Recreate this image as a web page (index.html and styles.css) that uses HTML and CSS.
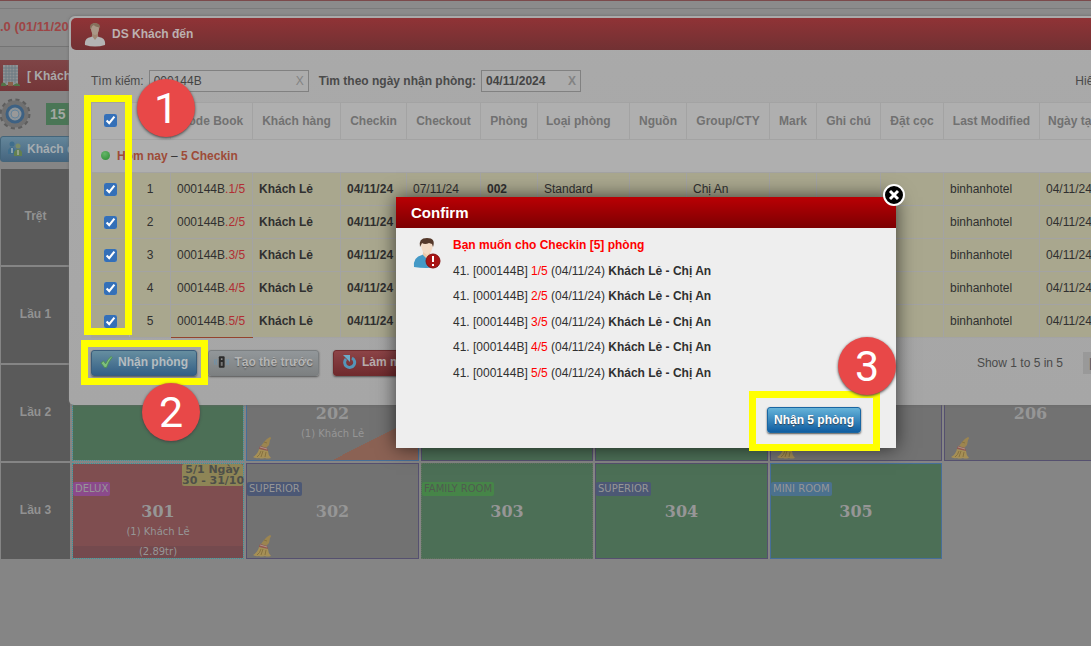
FILE: index.html
```
<!DOCTYPE html>
<html lang="vi">
<head>
<meta charset="utf-8">
<title>DS Khách đến</title>
<link rel="stylesheet" href="styles.css">
</head>
<body>
<svg class="defs" width="0" height="0" aria-hidden="true">
  <symbol id="broom" viewBox="0 0 20 22">
    <path d="M18 0q2 1 0 3l-1 5-3 3-5-2 3-4q2-3 6-5z" fill="#9c8550"/>
    <path d="M8 9l7 2 1 3-9-2z" fill="#97564d"/>
    <path d="M8 10l7 2" stroke="#a9958b"/>
    <path d="M7 12l9 2q0 4 3 7-4 1-6 0-4 1-6 0-3 1-6-1 5-3 6-8z" fill="#a58f56"/>
    <path d="M9 14q-1 4-4 6M11 14l-2 6M14 15l-1 5M12 5l3 1" stroke="#87723f" fill="none"/>
  </symbol>
</svg>
<div class="page">
  <header class="topbar"><span class="version">.0 (01/11/2024)</span></header>
  <div class="side">
    <h2 class="side-title">
      <svg width="20" height="24" viewBox="0 0 20 24"><path d="M2 1h15v20H2z" fill="#8f9294"/><path d="M2 4h15M2 7h15M2 10h15M2 13h15M2 16h15M5 1v18M8 1v18M11 1v18M14 1v18" stroke="#6d7b82"/><path d="M7 18h5v4H7z" fill="#8b604a"/><path d="M0 22q0-5 4-3l2 3zm12 0q3-5 7-1v1z" fill="#527548"/></svg>
      <span>[ Khách sạn ]</span>
    </h2>
    <div class="side-stats">
      <svg width="32" height="32" viewBox="0 0 32 32"><circle cx="15" cy="16" r="14" fill="none" stroke="#5e5e5e" stroke-width="3" stroke-dasharray="4 3.33"/><circle cx="15" cy="16" r="11" fill="none" stroke="#707070" stroke-width="5"/><circle cx="15" cy="16" r="8" fill="#8d9499" stroke="#3d6183" stroke-width="3"/><circle cx="15" cy="16" r="4" fill="#999" stroke="#65849b"/></svg>
      <span class="count">15</span>
    </div>
    <button class="side-btn" type="button">
      <svg width="16" height="16" viewBox="0 0 16 16"><circle cx="5" cy="3" r="2.500" fill="#3f6e8c"/><path d="M1 13V9q4-6 7 0v4z" fill="#3f6e8c"/><path d="M4 7h2v5H4z" fill="#8ba1ae"/><circle cx="11" cy="5" r="2.500" fill="#7a8c68"/><path d="M7 15v-4q4-6 8 0v4z" fill="#638050"/><path d="M10 9h2v5h-2z" fill="#94a28a"/></svg>
      Khách đến
    </button>
  </div>
  <main class="rooms">
    <div class="floor">Trệt</div><div class="row-rest"></div>
    <div class="floor">Lầu 1</div><div class="row-rest"></div>
    <div class="floor">Lầu 2</div>
    <div class="room free dotted"></div>
    <div class="room dirty blue split"><b>202</b><span>(1) Khách Lẻ</span><svg class="broom"><use href="#broom"/></svg></div>
    <div class="room free"></div>
    <div class="room free"></div>
    <div class="room dirty"><svg class="broom"><use href="#broom"/></svg></div>
    <div class="room dirty"><b>206</b><svg class="broom"><use href="#broom"/></svg></div>
    <div class="floor">Lầu 3</div>
    <div class="room busy dotted"><em class="tag delux">DELUX</em><em class="stay">5/1 Ngày<br>30 - 31/10</em><b>301</b><span>(1) Khách Lẻ</span><span class="price">(2.89tr)</span></div>
    <div class="room dirty"><em class="tag superior">SUPERIOR</em><b>302</b><svg class="broom"><use href="#broom"/></svg></div>
    <div class="room free plain"><em class="tag family">FAMILY ROOM</em><b>303</b></div>
    <div class="room free"><em class="tag superior">SUPERIOR</em><b>304</b></div>
    <div class="room free blue"><em class="tag mini">MINI ROOM</em><b>305</b></div>
  </main>

  <section class="panel" aria-label="DS Khách đến">
    <h1 class="panel-head">
      <svg width="22" height="26" viewBox="0 0 22 26"><path d="M1 24q-1-7 6-8l2-1h4l2 1q7 1 6 8-10 3-20 0z" fill="#b4b4b4"/><path d="M8 11h6v4l-3 4-3-4z" fill="#a08874"/><ellipse cx="11" cy="8" rx="4" ry="6" fill="#aa9887"/><path d="M6 8q-1-6 5-6t5 6l-1-2q-4 0-5-2-3 1-3 4z" fill="#85715c"/></svg>
      DS Khách đến
    </h1>
    <form class="filters">
      <label for="q">Tìm kiếm:</label>
      <span class="field wide"><input id="q" type="text" value="000144B"><button type="button" aria-label="Xóa tìm kiếm">X</button></span>
      <label class="strong" for="d">Tìm theo ngày nhận phòng:</label>
      <span class="field date"><input id="d" type="text" value="04/11/2024"><button type="button" aria-label="Xóa ngày">X</button></span>
      <span class="display">Hiển thị</span>
    </form>
    <table class="guests">
      <colgroup><col class="w38"><col class="w41"><col class="w82"><col class="w88"><col class="w66"><col class="w74"><col class="w57"><col class="w92"><col class="w57"><col class="w83"><col class="w47"><col class="w64"><col class="w63"><col class="w96"><col class="w92"></colgroup>
      <thead><tr><th><input type="checkbox" checked aria-label="Chọn tất cả"></th><th>No</th><th>Code Book</th><th>Khách hàng</th><th>Checkin</th><th>Checkout</th><th>Phòng</th><th class="start">Loại phòng</th><th>Nguồn</th><th>Group/CTY</th><th>Mark</th><th>Ghi chú</th><th>Đặt cọc</th><th>Last Modified</th><th class="start">Ngày tạo</th></tr></thead>
      <tbody>
        <tr class="group"><td colspan="15"><i class="dot"></i><b>Hôm nay</b> – <b>5 Checkin</b></td></tr>
        <tr><td><input type="checkbox" checked aria-label="Chọn 1"></td><td>1</td><td>000144B<i>.1/5</i></td><td><b>Khách Lẻ</b></td><td><b>04/11/24</b></td><td>07/11/24</td><td><b>002</b></td><td>Standard</td><td></td><td>Chị An</td><td></td><td></td><td></td><td>binhanhotel</td><td>04/11/24</td></tr>
        <tr><td><input type="checkbox" checked aria-label="Chọn 2"></td><td>2</td><td>000144B<i>.2/5</i></td><td><b>Khách Lẻ</b></td><td><b>04/11/24</b></td><td></td><td></td><td></td><td></td><td></td><td></td><td></td><td></td><td>binhanhotel</td><td>04/11/24</td></tr>
        <tr><td><input type="checkbox" checked aria-label="Chọn 3"></td><td>3</td><td>000144B<i>.3/5</i></td><td><b>Khách Lẻ</b></td><td><b>04/11/24</b></td><td></td><td></td><td></td><td></td><td></td><td></td><td></td><td></td><td>binhanhotel</td><td>04/11/24</td></tr>
        <tr><td><input type="checkbox" checked aria-label="Chọn 4"></td><td>4</td><td>000144B<i>.4/5</i></td><td><b>Khách Lẻ</b></td><td><b>04/11/24</b></td><td></td><td></td><td></td><td></td><td></td><td></td><td></td><td></td><td>binhanhotel</td><td>04/11/24</td></tr>
        <tr><td><input type="checkbox" checked aria-label="Chọn 5"></td><td>5</td><td class="sorted">000144B<i>.5/5</i></td><td><b>Khách Lẻ</b></td><td><b>04/11/24</b></td><td></td><td></td><td></td><td></td><td></td><td></td><td></td><td></td><td>binhanhotel</td><td>04/11/24</td></tr>
      </tbody>
    </table>
    <footer class="actions">
      <button class="btn dim-blue" type="button"><svg width="14" height="14" viewBox="0 0 14 14"><path d="M1 8l3-2 2 3q2-5 6-8l1 1q-4 5-6 11H5z" fill="#7fc07c" stroke="#4f8f55"/></svg>Nhận phòng</button>
      <button class="btn dim-gray" type="button"><svg width="16" height="14" viewBox="0 0 16 14"><rect x="5" y="1" width="6" height="12" rx="1" fill="#2c2c2c"/><circle cx="8" cy="4" r="1" fill="#999"/><path d="M7 7h2v4H7z" fill="#777"/><path d="M3 4q-2 3 0 6M1 4q-1 3 0 6M13 4q2 3 0 6M15 4q1 3 0 6" fill="none" stroke="#7191a8"/></svg>Tạo thẻ trước</button>
      <button class="btn dim-red" type="button"><svg width="15" height="15" viewBox="0 0 15 15"><path d="M10 4a5 5 0 1 1-6 1" fill="none" stroke="#5595b8" stroke-width="3"/><path d="M1 1h7v7z" fill="#6cabc8"/></svg>Làm mới</button>
      <span class="summary">Show 1 to 5 in 5</span><button class="pager" type="button" aria-label="Trang đầu">|</button>
    </footer>
  </section>

  <section class="confirm" role="dialog" aria-labelledby="ct">
    <h2 id="ct">Confirm</h2>
    <button class="close" type="button" aria-label="Đóng"><svg width="24" height="24" viewBox="0 0 24 24"><circle cx="12" cy="12" r="10" fill="#000" stroke="#fff" stroke-width="2"/><path d="M8 8l8 8M16 8l-8 8" stroke="#fff" stroke-width="3"/></svg></button>
    <div class="confirm-body">
      <svg width="28" height="32" viewBox="0 0 28 32"><path d="M1 30q-1-10 8-12l2-1h5l2 1q7 2 7 12-12 2-24 0z" fill="#4499c6"/><path d="M10 13h7v5l-3 4-4-4z" fill="#ecc9aa"/><path d="M8 7q0-3 6-3t6 3-2 8l-4 3-4-3q-2-4-2-8z" fill="#f2dac5"/><path d="M7 10Q5 1 14 1t6 9l-1-3-3-1q-4 2-7 0z" fill="#54382a"/><circle cx="20" cy="24" r="7" fill="#a91414" stroke="#861010"/><path d="M20 19v6M20 27v2" stroke="#fff" stroke-width="2"/></svg>
      <div class="message">
        <h3>Bạn muốn cho Checkin [5] phòng</h3>
        <p>41. [000144B] <i>1/5</i> (04/11/24) <b>Khách Lẻ - Chị An</b></p>
        <p>41. [000144B] <i>2/5</i> (04/11/24) <b>Khách Lẻ - Chị An</b></p>
        <p>41. [000144B] <i>3/5</i> (04/11/24) <b>Khách Lẻ - Chị An</b></p>
        <p>41. [000144B] <i>4/5</i> (04/11/24) <b>Khách Lẻ - Chị An</b></p>
        <p>41. [000144B] <i>5/5</i> (04/11/24) <b>Khách Lẻ - Chị An</b></p>
      </div>
    </div>
    <div class="confirm-foot"><button class="btn bright" type="button">Nhận 5 phòng</button></div>
  </section>

  <div class="mark box1"></div><div class="mark box2"></div><div class="mark box3"></div>
  <div class="step s1">1</div><div class="step s2">2</div><div class="step s3">3</div>
</div>
</body>
</html>
```
FILE: styles.css
```
* { box-sizing: border-box; }
body { margin: 0; font: 12px/16px "Liberation Sans", Arial, sans-serif; color: #303030; }
button, input { font: inherit; margin: 0; }
button { cursor: pointer; }
h1, h2, h3, p { margin: 0; font-size: inherit; }
i, em { font-style: normal; }
.defs { position: absolute; }
.page { position: relative; min-height: 100vh; overflow: hidden; background: #858585; }

.topbar { height: 60px; padding: 18px 0 0; border-top: 1px solid #7b4a4b; background: linear-gradient(#8b8b8b 0 7px, #7b7b7b 7px 8px, #8b8b8b 8px 45px, #747474 45px 46px, #888 46px); }
.version { font-size: 13px; font-weight: bold; color: #9e4545; white-space: nowrap; }
.side { width: 240px; }
.side-title { display: flex; align-items: center; gap: 6px; height: 31px; padding-left: 1px; background: linear-gradient(#7f4547, #743638); color: #a8a8a8; }
.side-stats { display: flex; align-items: center; gap: 14px; height: 45px; }
.count { padding: 2px 4px; width: 60px; background: #4a7656; color: #a2a8a3; font: bold 14px/18px "Liberation Sans", Arial, sans-serif; }
.side-btn { display: flex; align-items: center; gap: 4px; width: 200px; height: 26px; padding: 0 6px; border: 1px solid #44657a; border-radius: 3px; background: linear-gradient(#64869a, #45657f); color: #a5acb0; font-weight: bold; }

.rooms { display: grid; grid-template-columns: 69px 172px 173px 172px 173px 172px 173px; grid-auto-rows: 96px; gap: 2px; padding: 7px 0 0 1px; font-family: "DejaVu Sans", Verdana, sans-serif; font-size: 10px; }
.floor { display: flex; align-items: center; justify-content: center; padding-bottom: 2px; background: #5a5a5a; color: #929292; font: bold 12px/16px "Liberation Sans", Arial, sans-serif; }
.row-rest { grid-column: span 6; }
.room { position: relative; display: flex; flex-direction: column; align-items: center; padding-top: 38px; border: 1px solid #55506f; line-height: 14px; color: #969696; }
.room b { font: bold 16px/20px "DejaVu Serif", Georgia, serif; margin-bottom: 3px; }
.free { background: #4c6f56; }
.dirty { background: #727272; }
.busy { background: #7f4e50; }
.plain { border: 1px dotted #62745f; }
.dotted { border: 1px dotted #39969b; background-clip: padding-box; }
.blue { border-color: #466e99; }
.split { background: linear-gradient(153deg, transparent 76%, #8b6254 76%) #727272; }
.broom { position: absolute; left: 5px; bottom: 1px; width: 20px; height: 22px; }
.tag { position: absolute; left: 0; top: 18px; padding: 0 2px; border-radius: 2px; }
.delux { background: #8b4a8b; }
.superior { background: #4c5875; }
.family { background: #468548; color: #505b50; }
.mini { background: #4b718e; }
.stay { position: absolute; right: 0; top: 0; width: 61px; border-radius: 2px; background: #8e8556; color: #4e5049; font-size: 11px; font-weight: bold; line-height: 11px; text-align: center; white-space: nowrap; }
.price { align-self: stretch; margin-top: auto; text-align: center; line-height: 12px; background: #744a4e; }

.panel { position: absolute; left: 69px; right: -43px; top: 16px; padding: 2px; border-radius: 6px 0 0 5px; background: linear-gradient(#aaa, #a9a9a9 52px, #a6a6a6); box-shadow: 0 0 3px #666; }
.panel-head { display: flex; align-items: center; gap: 6px; height: 32px; padding-left: 13px; border-radius: 5px 0 0 5px; background: linear-gradient(#903336, #713133); color: #bcb0b0; }
.filters { display: flex; align-items: center; height: 52px; padding: 10px 20px 0; color: #4a4a4a; }
.field { display: flex; align-items: center; height: 22px; border: 1px solid #818181; margin: 0 10px 0 5px; background: #acacac; }
.field input { flex: 1; min-width: 0; padding: 0 4px; border: 0; outline: 0; background: none; color: #444; }
.field button { padding: 0 4px; border: 0; background: none; color: #838383; }
.wide { width: 160px; }
.date { width: 100px; font-weight: bold; }
.strong { font-weight: bold; }
.display { margin-left: auto; margin-right: -4px; white-space: nowrap; }

.guests { table-layout: fixed; width: 1040px; margin-left: 20px; border-collapse: collapse; border: 1px solid #999; background: #afafaf; white-space: nowrap; }
.w38 { width: 38px; } .w41 { width: 41px; } .w47 { width: 47px; } .w57 { width: 57px; } .w63 { width: 63px; } .w64 { width: 64px; } .w66 { width: 66px; } .w74 { width: 74px; } .w82 { width: 82px; } .w83 { width: 83px; } .w88 { width: 88px; } .w92 { width: 92px; } .w96 { width: 96px; }
.guests th, .guests td { height: 33px; padding: 0 6px; border: 1px solid #a3a3a3; text-align: left; overflow: hidden; }
.guests th { height: 37px; padding: 0 0 1px; text-align: center; color: #717171; }
.guests th.start { padding-left: 8px; text-align: left; }
.guests td { background: #a9a78e; }
.guests th:first-child, .guests td:first-child { border-right-color: transparent; text-align: center; }
.guests td:nth-child(2) { text-align: center; }
.guests .group td { background: #afafaf; text-align: left; padding-left: 9px; }
.guests td i { color: #b12e34; }
.group b { color: #9e4b38; font-weight: bold; }
.guests .dot { display: inline-block; width: 9px; height: 9px; margin-right: 7px; border-radius: 50%; background: radial-gradient(circle at 40% 30%, #65b568, #298a30); }
.guests .sorted { border-bottom-color: #94442e; }
.guests input { display: block; width: 13px; height: 13px; margin: 0 auto; accent-color: #3470b8; }

.actions { display: flex; align-items: center; height: 65px; padding: 0 20px 16px 20px; }
.btn { display: flex; align-items: center; justify-content: center; gap: 5px; height: 26px; padding: 0 8px 2px; border: 1px solid #3b5d7b; border-radius: 3px; font-weight: bold; box-shadow: 0 1px 2px #555; white-space: nowrap; }
.dim-blue { width: 106px; background: linear-gradient(#668ea0, #345f86); color: #b5bcc0; }
.dim-gray { width: 111px; margin-left: 11px; padding: 0 5px 2px; border-color: #7a7e80; background: linear-gradient(#92979a, #7d8081); color: #b5b5b5; text-shadow: 0 1px 1px #555; }
.dim-red { justify-content: flex-start; width: 92px; margin-left: 14px; border-color: #702c2e; background: linear-gradient(#8d4447, #702b2e); color: #b7adad; }
.summary { margin-left: auto; margin-right: 20px; color: #4a4a4a; }
.pager { width: 29px; height: 22px; border: 0; background: #999; text-align: left; color: #555; }

.confirm { position: absolute; left: 396px; top: 197px; width: 500px; background: #eee; box-shadow: 0 0 18px rgba(0,0,0,.65); color: #303030; }
.confirm h2 { height: 31px; padding: 0 15px; background: linear-gradient(#ba0004, #7c0002); color: #fff; font-size: 15px; line-height: 31px; }
.close { position: absolute; right: -10px; top: -14px; width: 24px; height: 24px; padding: 0; border: 0; border-radius: 50%; background: none; }
.close svg { display: block; }
.confirm-body { display: flex; gap: 12px; padding: 9px 17px 0; }
.confirm-body svg { flex: none; }
.message { display: flex; flex-direction: column; justify-content: space-between; min-height: 144px; }
.confirm h3, .confirm i { color: #f00; }
.confirm-foot { display: flex; justify-content: flex-end; padding: 26px 35px 15px; }
.bright { width: 94px; height: 26px; padding: 0; border-color: #1966a2; background: linear-gradient(#65b3d9, #0f5da1); color: #fff; text-shadow: 0 1px 1px #345; }

.mark { position: absolute; border: 7px solid #ff0; pointer-events: none; }
.box1 { left: 84px; top: 95px; width: 48px; height: 240px; }
.box2 { left: 81px; top: 340px; width: 127px; height: 45px; }
.box3 { left: 749px; top: 391px; width: 131px; height: 60px; }
.step { position: absolute; width: 58px; height: 58px; border-radius: 50%; background: #e84848; color: #fff; font: 43px/58px Roboto, sans-serif; text-align: center; box-shadow: 0 1px 3px #444; }
.s1 { left: 137px; top: 79px; }
.s2 { left: 142px; top: 383px; }
.s3 { left: 838px; top: 337px; }
```
